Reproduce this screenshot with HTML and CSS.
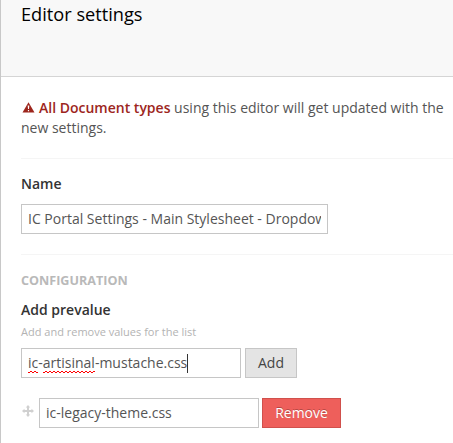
FILE: index.html
```html
<!DOCTYPE html>
<html lang="en">
<head>
<meta charset="utf-8">
<title>Editor settings</title>
<link rel="stylesheet" href="styles.css">
</head>
<body>
<div class="panel">
  <header class="panel-header"><h1>Editor settings</h1></header>
  <main class="panel-body">
    <p class="notice"><svg class="warn" width="13" height="11" viewBox="0 0 13 11"><path d="M6.500 0.300 12.500 10.500H0.500Z" fill="#9d261d"/><path d="M5.700 3.500h1.600l-.3 3.600h-1zM5.900 8h1.200v1.200H5.900z" fill="#fff"/></svg><strong>All Document types</strong> using this editor will get updated with the new settings.</p>
    <section class="group name-group">
      <label class="label">Name</label>
      <div class="field name-field"><span class="value">IC Portal Settings - Main Stylesheet - Dropdown</span></div>
    </section>
    <section class="group">
      <h2>CONFIGURATION</h2>
      <label class="label">Add prevalue</label>
      <small class="hint">Add and remove values for the list</small>
      <div class="row">
        <div class="field"><span class="value"><span class="misspelt">ic</span>-<span class="misspelt">artisinal</span>-mustache.css</span><span class="caret"></span></div>
        <div class="btn btn-add">Add</div>
      </div>
      <div class="row item">
        <svg class="move" width="12" height="12" viewBox="0 0 12 12"><path d="M6 0 8.200 2.500H7V5H9.500V3.800L12 6 9.500 8.200V7H7V9.500H8.200L6 12 3.800 9.500H5V7H2.500V8.200L0 6 2.500 3.800V5H5V2.500H3.800Z" fill="#d0d0d0"/></svg>
        <div class="field"><span class="value">ic-legacy-theme.css</span></div>
        <div class="btn btn-remove">Remove</div>
      </div>
    </section>
  </main>
</div>
</body>
</html>
```
FILE: styles.css
```css
* { box-sizing: border-box; }
body {
  margin: 0;
  background: #fff;
  color: #555;
  font: 14px/20px "Open Sans", sans-serif;
  overflow: hidden;
}
.panel { height: 443px; border-left: 1px solid #c8c8c8; }
.panel-header {
  height: 77px;
  padding: 4px 20px;
  background: #f8f8f8;
  border-bottom: 1px solid #d5d5d5;
}
h1 { margin: 0; font-size: 18.2px; line-height: 20px; font-weight: 400; color: #000; }
.panel-body { padding: 21px 0 0 20px; }
.notice { margin: 0; height: 60px; }
.notice strong { color: #9d261d; font-weight: 600; }
.warn { margin: 0 4px 0 1px; }
.group { border-top: 1px solid #f5f5f5; }
.name-group { height: 96px; padding-top: 15px; }
.label { display: block; color: #333; font-weight: 600; }
.field {
  display: flex;
  align-items: center;
  width: 220px;
  height: 30px;
  padding: 0 6px;
  border: 1px solid #c6c6c6;
  background: #fff;
}
.name-field { width: 307px; margin-top: 10px; }
.value { overflow: hidden; white-space: nowrap; }
h2 { margin: 16px 0 9px; font-size: 12.6px; line-height: 20px; font-weight: 700; color: #b9b9b9; }
.hint { display: block; height: 28px; font-size: 11px; line-height: 24px; color: #b3b3b3; }
.row { display: flex; align-items: center; gap: 4px; }
.misspelt {
  padding-bottom: 1px;
  background: repeating-conic-gradient(#f00 0 25%, transparent 0 50%) 0 100% / 4px 2px repeat-x;
}
.caret { width: 1px; height: 19px; background: #333; }
.btn {
  height: 30px;
  line-height: 28px;
  text-align: center;
  border: 1px solid #c6c6c6;
}
.btn-add { width: 52px; background: #e4e4e4; color: #444; }
.item { margin-top: 20px; gap: 3px; }
.move { margin: -4px 2px 0 1px; }
.btn-remove { width: 79px; color: #fff; background: #ee5f5b; border-color: #d0504c; text-shadow: 0 -1px 0 rgba(0,0,0,.25); }
```
